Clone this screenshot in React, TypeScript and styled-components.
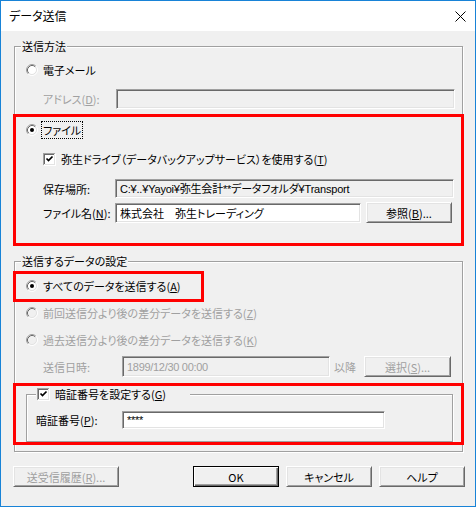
import React from "react";
import styled, { createGlobalStyle } from "styled-components";

const Global = createGlobalStyle`
  html, body { margin: 0; padding: 0; background: #ffffff; }
  body { font-family: "Noto Sans CJK JP", "Noto Sans", sans-serif; font-size: 12px; }
`;

const Window = styled.div`
  width: 476px;
  height: 507px;
  box-sizing: border-box;
  border: 1px solid #1883d7;
  display: flex;
  flex-direction: column;
  background: #f0f0f0;
  font-family: "Noto Sans CJK JP", "Noto Sans", sans-serif;
  font-size: 11px;
  line-height: 16px;
  color: #000;
  font-feature-settings: "palt";
`;

const TitleBar = styled.div`
  height: 30px;
  flex: none;
  background: #fff;
  display: flex;
  align-items: center;
  justify-content: space-between;
  padding: 0 9px 0 8px;
  font-size: 12px;
`;

const Body = styled.div`
  flex: 1;
  display: flex;
  flex-direction: column;
  padding: 15px 12px 0 13px;
`;

const Group = styled.div<{ $mt?: number; $pb?: number }>`
  display: flex;
  flex-direction: column;
  margin-top: ${(p) => p.$mt ?? 0}px;
  padding-bottom: ${(p) => p.$pb ?? 0}px;
  border: 1px solid #a0a0a0;
  box-shadow: inset 1px 1px 0 #fff, 1px 1px 0 #fff;
`;

const Legend = styled.div<{ $ml: number; $pr?: number }>`
  display: flex;
  align-items: center;
  gap: 5px;
  width: fit-content;
  height: 16px;
  margin: -9px 0 -7px ${(p) => p.$ml}px;
  padding: 0 ${(p) => p.$pr ?? 1}px 0 1px;
  background: #f0f0f0;
  white-space: nowrap;
`;

const RedBox = styled.div<{ $mt: number; $w: number; $h?: number; $pb?: number; $mb?: number }>`
  display: flex;
  flex-direction: column;
  box-sizing: border-box;
  width: ${(p) => p.$w}px;
  ${(p) => (p.$h ? `height: ${p.$h}px;` : "")}
  margin: ${(p) => p.$mt}px 0 ${(p) => p.$mb ?? 0}px -2px;
  padding-bottom: ${(p) => p.$pb ?? 0}px;
  border: 3px solid #ff0000;
  overflow: hidden;
`;

const Row = styled.div<{ $mt: number; $ml: number; $h?: number }>`
  display: flex;
  align-items: center;
  height: ${(p) => p.$h ?? 16}px;
  margin-top: ${(p) => p.$mt}px;
  margin-left: ${(p) => p.$ml}px;
  white-space: nowrap;
`;

const Choice = styled.div<{ $disabled?: boolean }>`
  display: flex;
  align-items: center;
  gap: 5px;
  color: ${(p) => (p.$disabled ? "#a0a0a0" : "#000")};
`;

const FocusText = styled.span`
  outline: 1px dotted #000;
  outline-offset: 0px;
  padding: 0 1px;
  margin-left: -1px;
`;

const Label = styled.span<{ $w: number; $disabled?: boolean }>`
  width: ${(p) => p.$w}px;
  flex: none;
  color: ${(p) => (p.$disabled ? "#a0a0a0" : "#000")};
`;

const Field = styled.div<{ $w: number; $h: number; $white?: boolean; $disabled?: boolean }>`
  box-sizing: border-box;
  width: ${(p) => p.$w}px;
  height: ${(p) => p.$h}px;
  flex: none;
  display: flex;
  align-items: center;
  padding-left: 4px;
  background: ${(p) => (p.$white ? "#fff" : "#f0f0f0")};
  color: ${(p) => (p.$disabled ? "#a0a0a0" : "#000")};
  border-top: 1px solid #a0a0a0;
  border-left: 1px solid #a0a0a0;
  border-right: 1px solid #fff;
  border-bottom: 1px solid #fff;
  box-shadow: inset 1px 1px 0 #696969, inset -1px -1px 0 #e3e3e3;
  font-family: "Liberation Sans", "Noto Sans CJK JP", sans-serif;
  font-feature-settings: normal;
  letter-spacing: -0.3px;
  overflow: hidden;
`;

const JpField = styled(Field)`
  font-family: "Noto Sans CJK JP", sans-serif;
  font-feature-settings: "palt";
  letter-spacing: 0;
`;

const PathField = styled(Field)`
  font-feature-settings: "palt";
  letter-spacing: -0.2px;
`;

const Button = styled.div<{ $w: number; $disabled?: boolean; $default?: boolean }>`
  box-sizing: border-box;
  width: ${(p) => p.$w}px;
  height: 21px;
  flex: none;
  display: flex;
  align-items: center;
  justify-content: center;
  background: #f0f0f0;
  color: ${(p) => (p.$disabled ? "#a0a0a0" : "#000")};
  border-top: 1px solid ${(p) => (p.$default ? "#000" : "#fff")};
  border-left: 1px solid ${(p) => (p.$default ? "#000" : "#fff")};
  border-right: 1px solid ${(p) => (p.$default ? "#000" : "#696969")};
  border-bottom: 1px solid ${(p) => (p.$default ? "#000" : "#696969")};
  box-shadow: ${(p) =>
    p.$default
      ? "inset 1px 1px 0 #fff, inset -1px -1px 0 #696969, inset -2px -2px 0 #a0a0a0"
      : "inset 1px 1px 0 #e3e3e3, inset -1px -1px 0 #a0a0a0"};
  white-space: nowrap;
`;

const ButtonBar = styled.div`
  display: flex;
  justify-content: space-between;
  margin: 14px -2px 0 -1px;
`;

const ButtonGroup = styled.div`
  display: flex;
  gap: 7px;
`;

const After = styled.span<{ $ml: number; $mr: number }>`
  margin: 0 ${(p) => p.$mr}px 0 ${(p) => p.$ml}px;
  color: #a0a0a0;
`;

const Radio = ({ checked, disabled }: { checked?: boolean; disabled?: boolean }) => (
  <svg width="12" height="12" viewBox="0 0 12 12" style={{ flex: "none" }}>
    <circle cx="6" cy="6" r="4" fill={disabled ? "#f0f0f0" : "#fff"} />
    <path d="M2.11 9.89 A5.5 5.5 0 0 1 9.89 2.11" fill="none" stroke="#a0a0a0" />
    <path d="M9.89 2.11 A5.5 5.5 0 0 1 2.11 9.89" fill="none" stroke="#fff" />
    <path d="M2.82 9.18 A4.5 4.5 0 0 1 9.18 2.82" fill="none" stroke="#696969" />
    <path d="M9.18 2.82 A4.5 4.5 0 0 1 2.82 9.18" fill="none" stroke="#e3e3e3" />
    {checked && <circle cx="6" cy="6" r="2" fill="#000" />}
  </svg>
);

const Check = () => (
  <svg width="13" height="13" viewBox="0 0 13 13" style={{ flex: "none" }} shapeRendering="crispEdges">
    <rect x="2" y="2" width="9" height="9" fill="#fff" />
    <path d="M0.5 12 V0.5 H12" fill="none" stroke="#a0a0a0" />
    <path d="M0.5 12.5 H12.5 V0.5" fill="none" stroke="#fff" />
    <path d="M1.5 11 V1.5 H11" fill="none" stroke="#696969" />
    <path d="M1.5 11.5 H11.5 V1.5" fill="none" stroke="#e3e3e3" />
    <path d="M3.5 5.5 L5.5 7.5 L9.5 3.5" fill="none" stroke="#000" strokeWidth="1.7" shapeRendering="auto" />
  </svg>
);

const CloseIcon = () => (
  <svg width="11" height="11" viewBox="0 0 11 11">
    <path d="M0.5 0.5 L10.5 10.5 M10.5 0.5 L0.5 10.5" stroke="#000" strokeWidth="1" fill="none" />
  </svg>
);

export default function App() {
  return (
    <>
      <Global />
      <Window>
        <TitleBar>
          <span>データ送信</span>
          <CloseIcon />
        </TitleBar>
        <Body>
          <Group $mt={0}>
            <Legend $ml={6}>送信方法</Legend>
            <Row $mt={15} $ml={11}>
              <Choice>
                <Radio />
                <span>電子メール</span>
              </Choice>
            </Row>
            <Row $mt={11} $ml={28} $h={20}>
              <Label $w={73} $disabled>
                アドレス(<u>D</u>):
              </Label>
              <Field $w={339} $h={20} />
            </Row>
            <RedBox $mt={5} $w={451} $pb={20} $mb={-2}>
              <Row $mt={5} $ml={10}>
                <Choice>
                  <Radio checked />
                  <FocusText>ファイル</FocusText>
                </Choice>
              </Row>
              <Row $mt={13} $ml={27}>
                <Choice>
                  <Check />
                  <span>
                    弥生ドライブ（データバックアップサービス）を使用する(<u>T</u>)
                  </span>
                </Choice>
              </Row>
              <Row $mt={12} $ml={27} $h={19}>
                <Label $w={72}>保存場所:</Label>
                <PathField $w={339} $h={19}>
                  C:¥..¥Yayoi¥弥生会計**データフォルダ¥Transport
                </PathField>
              </Row>
              <Row $mt={4} $ml={27} $h={21}>
                <Label $w={72}>
                  ファイル名(<u>N</u>):
                </Label>
                <JpField $w={246} $h={20} $white>
                  株式会社　弥生トレーディング
                </JpField>
                <Button $w={86} style={{ marginLeft: 5 }}>
                  参照(<u>B</u>)...
                </Button>
              </Row>
            </RedBox>
          </Group>

          <Group $mt={16} $pb={6}>
            <Legend $ml={6}>送信するデータの設定</Legend>
            <RedBox $mt={9} $w={191} $h={31}>
              <Row $mt={4} $ml={10}>
                <Choice>
                  <Radio checked />
                  <span>
                    すべてのデータを送信する(<u>A</u>)
                  </span>
                </Choice>
              </Row>
            </RedBox>
            <Row $mt={3} $ml={11}>
              <Choice $disabled>
                <Radio disabled />
                <span>
                  前回送信分より後の差分データを送信する(<u>Z</u>)
                </span>
              </Choice>
            </Row>
            <Row $mt={11} $ml={11}>
              <Choice $disabled>
                <Radio disabled />
                <span>
                  過去送信分より後の差分データを送信する(<u>K</u>)
                </span>
              </Choice>
            </Row>
            <Row $mt={8} $ml={28} $h={21}>
              <Label $w={79} $disabled>
                送信日時:
              </Label>
              <Field $w={208} $h={21} $disabled>
                1899/12/30 00:00
              </Field>
              <After $ml={4} $mr={8}>以降</After>
              <Button $w={87} $disabled>
                選択(<u>S</u>)...
              </Button>
            </Row>
            <RedBox $mt={6} $w={451} $h={62}>
              <Group $mt={8} style={{ marginLeft: 10, width: 425, height: 60 }}>
                <Legend $ml={9} $pr={24}>
                  <Check />
                  <span>
                    暗証番号を設定する(<u>G</u>)
                  </span>
                </Legend>
                <Row $mt={16} $ml={9} $h={18}>
                  <Label $w={86}>
                    暗証番号(<u>P</u>):
                  </Label>
                  <Field $w={263} $h={18} $white>
                    ****
                  </Field>
                </Row>
              </Group>
            </RedBox>
          </Group>

          <ButtonBar>
            <Button $w={106} $disabled>
              送受信履歴(<u>R</u>)...
            </Button>
            <ButtonGroup>
              <Button $w={86} $default>
                OK
              </Button>
              <Button $w={86}>キャンセル</Button>
              <Button $w={86}>ヘルプ</Button>
            </ButtonGroup>
          </ButtonBar>
        </Body>
      </Window>
    </>
  );
}
